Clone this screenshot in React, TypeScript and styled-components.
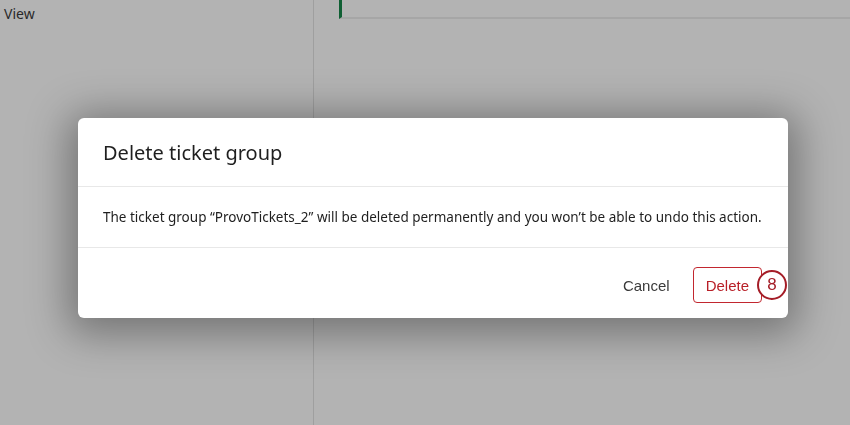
import * as React from "react";
import styled, { createGlobalStyle } from "styled-components";

const GlobalStyle = createGlobalStyle`
  html, body {
    margin: 0;
    padding: 0;
    width: 100%;
    height: 100%;
    overflow: hidden;
  }
  body {
    font-family: "Noto Sans", "Open Sans", sans-serif;
    background: #b3b3b3;
  }
`;

// Page behind the dimming overlay
const Page = styled.div`
  display: flex;
  width: 850px;
  height: 425px;
  background: #b3b3b3;
`;

const Sidebar = styled.aside`
  width: 314px;
  flex-shrink: 0;
  border-right: 1px solid #9f9f9f;
  padding: 4px 4px;
  box-sizing: border-box;
  font-size: 14px;
  color: #2a2a2a;
`;

const Main = styled.main`
  flex: 1;
  padding-left: 25px;
`;

const Card = styled.div`
  height: 17px;
  border-left: 3px solid #0f5f33;
  border-bottom: 2px solid #a6a6a6;
`;

// Modal
const Dialog = styled.section`
  position: fixed;
  left: 78px;
  top: 118px;
  width: 710px;
  height: 200px;
  background: #fff;
  border-radius: 6px;
  box-shadow: 0 6px 40px 10px rgba(0, 0, 0, 0.35);
  display: flex;
  flex-direction: column;
`;

const Header = styled.header`
  height: 69px;
  display: flex;
  align-items: center;
  padding: 0 25px;
  border-bottom: 1px solid #e8e8e8;
  box-sizing: border-box;
`;

const Title = styled.h2`
  margin: 0;
  font-size: 20px;
  font-weight: 400;
  color: #1f1f1f;
`;

const Body = styled.div`
  height: 61px;
  display: flex;
  align-items: center;
  padding: 0 25px;
  border-bottom: 1px solid #e8e8e8;
  box-sizing: border-box;
  font-size: 13.5px;
  white-space: nowrap;
  color: #1f1f1f;
`;

const Footer = styled.footer`
  flex: 1;
  display: flex;
  align-items: center;
  justify-content: flex-end;
  padding: 4px 26px 0 0;
  gap: 8px;
`;

const Button = styled.button<{ $danger?: boolean }>`
  font-family: "Liberation Sans", Arial, sans-serif;
  font-size: 15px;
  height: 36px;
  padding: 0 ${(p) => (p.$danger ? "12px" : "14px")};
  border-radius: 4px;
  background: #fff;
  cursor: pointer;
  border: 1px solid ${(p) => (p.$danger ? "#c2272f" : "transparent")};
  color: ${(p) => (p.$danger ? "#b81f27" : "#3a3a3a")};
`;

const ButtonWrap = styled.div`
  position: relative;
  display: flex;
`;

const Badge = styled.span`
  position: absolute;
  right: -25px;
  top: 50%;
  transform: translateY(-50%);
  width: 26px;
  height: 26px;
  border-radius: 50%;
  border: 2.5px solid #a41d27;
  background: #fff;
  display: flex;
  align-items: center;
  justify-content: center;
  font-family: "Liberation Sans", Arial, sans-serif;
  font-size: 17px;
  color: #a41d27;
`;

export default function App() {
  return (
    <>
      <GlobalStyle />
      <Page>
        <Sidebar>View</Sidebar>
        <Main>
          <Card />
        </Main>
      </Page>
      <Dialog role="dialog" aria-labelledby="dlg-title">
        <Header>
          <Title id="dlg-title">Delete ticket group</Title>
        </Header>
        <Body>
          The ticket group “ProvoTickets_2” will be deleted permanently and you
          won’t be able to undo this action.
        </Body>
        <Footer>
          <Button>Cancel</Button>
          <ButtonWrap>
            <Button $danger>Delete</Button>
            <Badge>8</Badge>
          </ButtonWrap>
        </Footer>
      </Dialog>
    </>
  );
}
